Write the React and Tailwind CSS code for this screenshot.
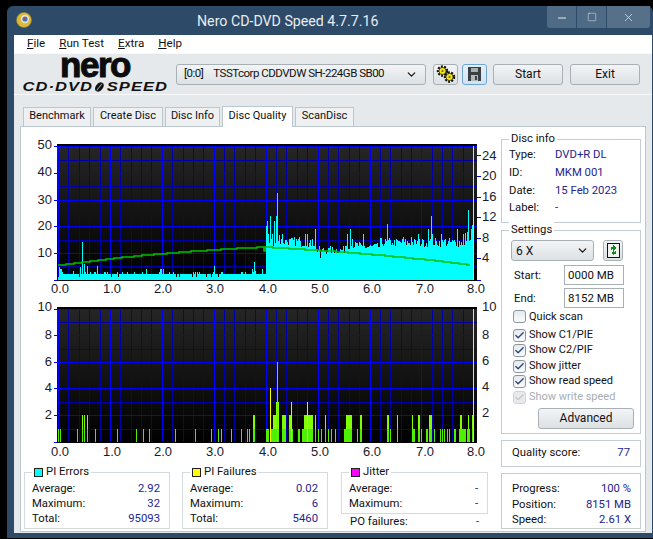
import React from 'react';
import { ChevronDown, Check, Minus, Square, X } from 'lucide-react';

// chart 1 data: one bar per pixel column, x in page coordinates
let seed = 7;
const rnd = () => {
	seed = (seed * 16807) % 2147483647;
	return seed / 2147483647;
};

const peaks = {
	59: 13, 60: 11, 61: 11, 73: 9, 80: 13, 82: 38, 84: 16, 87: 14, 97: 14, 104: 8, 105: 8, 127: 8, 146: 11, 160: 11, 161: 11, 163: 11,
	214: 14, 252: 11, 254: 18, 255: 9, 262: 11, 266: 54, 267: 59, 268: 46, 270: 64, 272: 46, 274: 59, 276: 64, 277: 87, 279: 45,
	282: 46, 285: 40, 299: 43, 305: 46, 307: 46, 312: 41, 315: 51, 320: 22, 329: 32, 347: 46, 350: 51, 352: 41, 363: 46, 375: 36,
	387: 56, 392: 37, 403: 43, 411: 43, 418: 46, 423: 40, 428: 51, 431: 64, 432: 46, 441: 46, 445: 41, 457: 51, 463: 46, 465: 47,
	467: 48, 468: 70, 471: 51, 472: 55,
};

const baseHeight = (x) => {
	const r = rnd();
	if (x < 266) return r > 0.9 ? 8 : r < 0.06 ? 3 : 6;
	if (x < 300) return 34 + r * 9;
	if (x < 316) return 33 + r * 7;
	if (x < 345) return 26 + r * 8;
	if (x < 360) return 31 + r * 8;
	if (x < 380) return 29 + r * 8;
	return 33 + r * 9;
};

const piErrors = [];
for (let x = 58; x < 473; x++) piErrors.push({ x, h: peaks[x] || baseHeight(x) });

const speedLine = (() => {
	const pts = [[58, 264], [110, 257.5], [163, 252.5], [217, 248.5], [263, 246], [264, 250], [265, 246], [320, 249.5], [377, 254], [427, 259], [470, 264]];
	const out = [];
	for (let i = 0; i < pts.length - 1; i++) {
		const [x1, y1] = pts[i];
		const [x2, y2] = pts[i + 1];
		for (let x = x1; x < x2; x += 4) {
			const y = Math.round(y1 + ((y2 - y1) * (x - x1)) / (x2 - x1));
			out.push(`${x},${y} ${Math.min(x + 4, x2)},${y}`);
		}
	}
	return out.join(' ');
})();

// chart 2 data: [x, width, level]
const piFailures = [
	[58, 1, 1], [60, 1, 1], [77, 1, 1], [82, 1, 2], [84, 1, 2], [87, 1, 2], [95, 1, 1], [117, 1, 1], [136, 1, 1], [143, 1, 1], [149, 1, 1],
	[175, 1, 1], [195, 1, 1], [211, 1, 1], [218, 1, 1], [221, 1, 1], [231, 1, 1], [241, 1, 1], [247, 1, 1], [249, 1, 1], [253, 2, 2], [266, 2, 1],
	[267, 2, 1], [270, 7, 1], [273, 3, 2], [276, 3, 3], [282, 1, 2], [283, 3, 2], [289, 3, 2], [292, 1, 1], [298, 2, 1], [302, 2, 1], [304, 9, 2],
	[315, 1, 2], [318, 1, 1], [321, 1, 1], [325, 1, 2], [328, 1, 1], [331, 1, 1], [335, 1, 1], [344, 2, 1], [346, 6, 2], [357, 1, 1], [360, 2, 2],
	[387, 2, 2], [390, 1, 1], [397, 1, 2], [412, 1, 2], [413, 2, 1], [418, 2, 2], [421, 1, 1], [426, 2, 1], [429, 3, 2], [434, 1, 1], [440, 1, 1],
	[442, 1, 1], [444, 1, 1], [447, 1, 1], [449, 1, 1], [454, 2, 1], [460, 2, 2], [459, 7, 1], [467, 3, 1], [468, 1, 2], [472, 1, 2],
];
const failureSpikes = [[270, 4, '#ffff00'], [277, 6, '#ffa500'], [291, 3, '#c8ff00'], [307, 3, '#c8ff00']];

const xLabels = [[60, '0.0'], [112, '1.0'], [163, '2.0'], [215, '3.0'], [268, '4.0'], [320, '5.0'], [372, '6.0'], [425, '7.0'], [476, '8.0']];
const xMajor = [58, 110, 162, 214, 266, 318, 370, 421, 473];
const xMinor = [];
for (let i = 0; i < 40; i++) if (i % 5) xMinor.push(Math.round(58 + i * 10.38));

const Plot = ({ id, top, bottom, major, minor, children }) => (
	<>
		<defs>
			<linearGradient id={id} x1="0" y1="0" x2="0" y2="1">
				<stop offset="0" stopColor="#262626" />
				<stop offset="1" stopColor="#000000" />
			</linearGradient>
		</defs>
		<rect x="57" y={top} width="420" height={bottom - top} fill={`url(#${id})`} />
		{xMinor.map((x) => <rect key={x} x={x} y={top} width="1" height={bottom - top} fill="#0000a8" />)}
		{minor.map((y) => <rect key={y} x="57" y={y} width="420" height="1" fill="#0000a8" />)}
		{xMajor.map((x) => <rect key={x} x={x} y={top} width="1" height={bottom - top} fill="#0000ff" />)}
		{major.map((y) => (
			<g key={y}>
				<rect x="57" y={y} width="420" height="1" fill="#0000ff" />
				<rect x="54" y={y} width="3" height="1" fill="#0000ff" />
			</g>
		))}
		{children}
		<rect x="473" y={top} width="1" height={bottom - top} fill="#d8d8d8" />
		<rect x="57" y={top - 1} width="420" height="2" fill="#000000" />
		<rect x="57" y={bottom} width="420" height="1" fill="#000000" />
	</>
);

const AxisText = ({ x, y, anchor = 'end', children }) => (
	<text x={x} y={y} textAnchor={anchor} fontSize="13" fill="#1a1a2e" fontFamily="'Liberation Sans', sans-serif">{children}</text>
);

const ChartOne = () => (
	<svg width="480" height="165" viewBox="21 130 480 165" shapeRendering="crispEdges" className="block">
		<Plot id="plotA" top={144} bottom={279} major={[145, 172, 199, 225, 252, 279]} minor={[159, 185, 212, 239, 265]}>
			{piErrors.map((b) => <rect key={b.x} x={b.x} y={279 - b.h} width="1" height={b.h} fill="#00ffff" />)}
			<polyline points={speedLine} fill="none" stroke="#00c000" strokeWidth="1.5" shapeRendering="auto" />
		</Plot>
		{[154, 175, 196, 216, 237, 257, 279].map((y) => <rect key={y} x="477" y={y} width="4" height="1" fill="#0000ff" />)}
		{[[24, 159], [20, 179], [16, 200], [12, 220], [8, 241], [4, 261]].map(([v, y]) => <AxisText key={v} x={482} y={y} anchor="start">{v}</AxisText>)}
		{[[50, 148], [40, 175], [30, 203], [20, 229], [10, 256]].map(([v, y]) => <AxisText key={v} x={52} y={y}>{v}</AxisText>)}
		{xLabels.map(([x, t]) => <AxisText key={t} x={x} y={292} anchor="middle">{t}</AxisText>)}
	</svg>
);

const ChartTwo = () => (
	<svg width="480" height="165" viewBox="21 295 480 165" shapeRendering="crispEdges" className="block">
		<Plot id="plotB" top={307} bottom={441} major={[308, 334, 361, 387, 414, 441]} minor={[321, 348, 374, 401, 428]}>
			{piFailures.filter((b) => b[2] > 1).map(([x, w, l]) => <rect key={`u${x}`} x={x} y={441 - l * 13.4} width={w} height={l * 13.4} fill="#80ff00" />)}
			{piFailures.map(([x, w]) => <rect key={x} x={x} y={428} width={w} height="13" fill="#4cf000" />)}
			{failureSpikes.map(([x, l, c]) => <rect key={x} x={x} y={441 - l * 13.4} width="1" height={l * 13.4} fill={c} />)}
		</Plot>
		{[[10, 310], [8, 338], [6, 364], [4, 390], [2, 416]].map(([v, y]) => <AxisText key={v} x={482} y={y} anchor="start">{v}</AxisText>)}
		{[[10, 310], [8, 338], [6, 365], [4, 391], [2, 418]].map(([v, y]) => <AxisText key={v} x={52} y={y}>{v}</AxisText>)}
		{xLabels.map(([x, t]) => <AxisText key={t} x={x} y={455} anchor="middle">{t}</AxisText>)}
	</svg>
);

const GroupBox = ({ title, swatch, className, children }) => (
	<div className={`relative border ${className}`}>
		<div className="absolute -top-[9px] left-[7px] flex items-center gap-[3px] bg-white px-[2px] leading-[16px]">
			{swatch && <span className={`h-[9px] w-[9px] border border-[#222] ${swatch}`}></span>}
			<span>{title}</span>
		</div>
		{children}
	</div>
);

const StatRow = ({ label, value }) => (
	<div className="flex h-[15px] items-center justify-between leading-[15px]">
		<span>{label}</span>
		<span className="text-[#24248f]">{value}</span>
	</div>
);

const Stats = ({ title, swatch, rows, className }) => (
	<GroupBox title={title} swatch={swatch} className={`border-[#d3dae0] pt-[8px] pr-[9px] pl-[7px] ${className}`}>
		{rows.map(([l, v]) => <StatRow key={l} label={l} value={v} />)}
	</GroupBox>
);

const Btn = ({ focused, className = '', children }) => (
	<div className={`flex h-[21px] items-center rounded-[3px] border bg-gradient-to-b ${focused ? 'border-[#6ea5d8] from-[#e4f0fa] to-[#cfe2f3]' : 'border-[#a8b0b6] from-[#f2f4f5] to-[#dde1e4]'} ${className}`}>
		{children}
	</div>
);

const CheckRow = ({ label, checked, disabled, className = '' }) => (
	<div className={`flex h-[15.5px] items-center gap-[3px] whitespace-nowrap ${className} ${disabled ? 'text-[#a6adb3]' : ''}`}>
		<span className={`flex h-[13px] w-[13px] items-center justify-center rounded-[3px] border ${disabled ? 'border-[#d0d4d8] bg-[#e8eaec]' : 'border-[#8d969d] bg-gradient-to-b from-[#e6eaee] to-[#fafbfc]'}`}>
			{checked && <Check size={11} strokeWidth={3} className={disabled ? 'text-[#c4c9cd]' : 'text-[#2c4a78]'} />}
		</span>
		<span>{label}</span>
	</div>
);

const Mnemonic = ({ first, rest }) => (
	<span><span className="underline">{first}</span>{rest}</span>
);

const Tab = ({ label, active, className }) => (
	<div className={`flex items-center justify-center rounded-t-[1px] border border-b-0 border-[#bcc6ce] pb-[2px] text-[11px] ${active ? 'relative z-10 -mb-px h-[21px] bg-white' : 'h-[19px] bg-[#eef0f2]'} ${className}`}>
		{label}
	</div>
);

const AppIcon = () => (
	<svg width="16" height="16" viewBox="0 0 16 16" className="mx-[2px]">
		<circle cx="8" cy="8" r="7.5" fill="#d9b93a" />
		<circle cx="8" cy="8" r="7.5" fill="none" stroke="#9a8124" strokeWidth="0.6" />
		<circle cx="9" cy="7" r="4.2" fill="#e9e4d0" />
		<circle cx="9" cy="7" r="2.6" fill="#4a78b8" />
		<circle cx="9" cy="7" r="1.1" fill="#c8403a" />
	</svg>
);

const Gear = ({ cx, cy }) => (
	<g>
		<circle cx={cx} cy={cy} r="4.1" fill="none" stroke="#111" strokeWidth="3.2" strokeDasharray="1.7 1.2" />
		<circle cx={cx} cy={cy} r="3.6" fill="#f6e512" stroke="#111" strokeWidth="0.7" />
		<circle cx={cx} cy={cy} r="1.1" fill="#6b6410" />
	</g>
);

const GearsIcon = () => (
	<svg width="20" height="18" viewBox="0 0 20 18">
		<Gear cx="6.5" cy="6" />
		<Gear cx="13.5" cy="12" />
	</svg>
);

const SaveIcon = () => (
	<svg width="13" height="14" viewBox="0 0 13 14" shapeRendering="crispEdges">
		<rect x="0" y="0" width="13" height="14" fill="#3a3f42" />
		<rect x="3" y="1" width="7" height="4" fill="#a8adb0" />
		<rect x="3" y="8" width="7" height="6" fill="#b4b8ba" />
		<rect x="7" y="9" width="2" height="4" fill="#3a3f42" />
	</svg>
);

const RefreshIcon = () => (
	<svg width="13" height="15" viewBox="0 0 13 15" shapeRendering="crispEdges">
		<rect x="0.5" y="0.5" width="12" height="14" fill="#eef3ee" stroke="#111" />
		<path d="M4 7V4h2V2l3 3-3 3V6H5v1z" fill="#0a8a1e" />
		<path d="M9 8v3H7v2l-3-3 3-3v2h1V8z" fill="#0a8a1e" />
	</svg>
);

const Logo = () => (
	<div className="flex w-[162px] flex-col items-center pt-[1px]">
		<div className="mt-[-4px] h-[24px] font-['Liberation_Sans'] text-[35px] leading-[24px] font-bold tracking-[-1.5px] text-[#0c0c0c] [-webkit-text-stroke:1px_#0c0c0c]">nero</div>
		<div className="mt-[4px] flex origin-center scale-x-[1.27] items-center font-['Liberation_Sans'] text-[13px] leading-[12px] font-bold tracking-[0.8px] text-[#111] italic">
			<span>CD·DVD</span>
			<svg width="9" height="12" viewBox="0 0 11 12" className="mx-[1px]">
				<ellipse cx="5.5" cy="6" rx="3.6" ry="6" transform="rotate(28 5.5 6)" fill="#111" />
				<path d="M3 10 L8 2" stroke="#e6e9eb" strokeWidth="0.8" />
			</svg>
			<span>SPEED</span>
		</div>
	</div>
);

export default function App() {
	return (
		<div className="flex h-[539px] w-[653px] flex-col overflow-hidden bg-black pt-[6px] pb-px pl-[7px] font-['Roboto',sans-serif] text-[11.3px] text-[#111]">
			<div className="flex flex-1 flex-col rounded-t-[6px] bg-[#2d4a69] pr-px pb-[5px] pl-[7px]">
				{/* title bar */}
				<div className="flex h-[29px] shrink-0 items-start">
					<div className="flex h-[29px] w-[183px] items-center pb-[1px]">
						<AppIcon />
					</div>
					<div className="pt-[5px] text-[14.2px] leading-[20px] text-[#e8edf2]">Nero CD-DVD Speed 4.7.7.16</div>
					<div className="mr-[2px] ml-auto flex h-[22px] gap-px text-[#e8edf2]">
						<div className="flex w-[29px] items-end justify-center rounded-bl-[3px] bg-[#4f6a85] pb-[4px]"><Minus size={12} /></div>
						<div className="flex w-[29px] items-center justify-center bg-[#4f6a85]"><Square size={10} strokeWidth={1.2} /></div>
						<div className="flex w-[43px] items-center justify-center rounded-br-[3px] bg-[#56708a]"><X size={13} strokeWidth={1.3} /></div>
					</div>
				</div>

				{/* client area */}
				<div className="flex flex-1 flex-col bg-[#e6e9eb]">
					<div className="flex h-[18px] shrink-0 items-center gap-[14px] bg-white pl-[13px] text-[11.6px]">
						<Mnemonic first="F" rest="ile" />
						<Mnemonic first="R" rest="un Test" />
						<Mnemonic first="E" rest="xtra" />
						<Mnemonic first="H" rest="elp" />
					</div>
					<div className="flex h-[42px] shrink-0 items-center border-y border-y-[#f8f9fa]">
						<Logo />
						<Btn className="mr-[7px] w-[250px] justify-between px-[7px]">
							<span className="flex gap-[10px] text-[11.5px] tracking-[-0.5px] whitespace-pre">
								<span>[0:0]</span>
								<span>TSSTcorp CDDVDW SH-224GB SB00</span>
							</span>
							<ChevronDown size={13} strokeWidth={2.2} />
						</Btn>
						<Btn className="mr-[4px] w-[25px] justify-center"><GearsIcon /></Btn>
						<Btn focused className="mr-[6px] w-[25px] justify-center"><SaveIcon /></Btn>
						<Btn className="mr-[7px] w-[70px] justify-center text-[12px]">Start</Btn>
						<Btn className="w-[70px] justify-center text-[12px]">Exit</Btn>
					</div>

					{/* tabs */}
					<div className="flex flex-1 flex-col px-[6px] pt-[11px]">
						<div className="flex h-[20px] shrink-0 items-end gap-[2px] pl-[3px]">
							<Tab label="Benchmark" className="w-[68px]" />
							<Tab label="Create Disc" className="w-[70px]" />
							<Tab label="Disc Info" className="w-[55px]" />
							<Tab label="Disc Quality" active className="w-[71px]" />
							<Tab label="ScanDisc" className="w-[59px]" />
						</div>
						<div className="flex h-[406px] border border-[#bcc6ce] bg-white">
							<div className="w-[480px] pt-[4px]">
								<ChartOne />
								<ChartTwo />
								<div className="mt-[11px] flex items-start pl-[3px]">
									<Stats title="PI Errors" swatch="bg-[#00ffff]" className="mr-[12px] h-[57px] w-[146px]" rows={[['Average:', '2.92'], ['Maximum:', '32'], ['Total:', '95093']]} />
									<Stats title="PI Failures" swatch="bg-[#ffff00]" className="mr-[13px] h-[57px] w-[146px]" rows={[['Average:', '0.02'], ['Maximum:', '6'], ['Total:', '5460']]} />
									<div className="w-[147px]">
										<Stats title="Jitter" swatch="bg-[#ff00ff]" className="h-[42px]" rows={[['Average:', '-'], ['Maximum:', '-']]} />
										<div className="px-[9px]"><StatRow label="PO failures:" value="-" /></div>
									</div>
								</div>
							</div>

							<div className="w-[140px] pt-[12px]">
								<GroupBox title="Disc info" className="h-[84px] border-[#c5cdd4] pt-[7px] pl-[7px]">
									<div className="grid auto-rows-[17.7px] grid-cols-[46px_1fr] items-center">
										<span>Type:</span><span className="text-[#24248f]">DVD+R DL</span>
										<span>ID:</span><span className="text-[#24248f]">MKM 001</span>
										<span>Date:</span><span className="text-[#24248f]">15 Feb 2023</span>
										<span>Label:</span><span className="text-[#24248f]">-</span>
									</div>
								</GroupBox>
								<GroupBox title="Settings" className="mt-[7px] h-[204px] border-[#c5cdd4] pt-[9px] pr-[16px] pl-[9px]">
									<div className="flex items-center justify-between">
										<Btn className="w-[83px] justify-between px-[4px] text-[12px]">
											<span>6 X</span>
											<ChevronDown size={13} strokeWidth={2.2} />
										</Btn>
										<Btn className="mr-px w-[20px] justify-center"><RefreshIcon /></Btn>
									</div>
									<div className="mt-[4px] flex h-[20px] items-center justify-between pl-[3px]">
										<span className="pt-[2px]">Start:</span>
										<input readOnly value="0000 MB" className="h-[20px] w-[60px] border border-[#a8b0b6] pl-[3px] text-[11.5px]" />
									</div>
									<div className="mt-[3px] flex h-[20px] items-center justify-between pl-[3px]">
										<span className="pt-[2px]">End:</span>
										<input readOnly value="8152 MB" className="h-[20px] w-[60px] border border-[#a8b0b6] pl-[3px] text-[11.5px]" />
									</div>
									<div className="mt-px pl-[2px] text-[11px]">
										<CheckRow label="Quick scan" className="mb-[2.75px]" />
										<CheckRow label="Show C1/PIE" checked />
										<CheckRow label="Show C2/PIF" checked />
										<CheckRow label="Show jitter" checked />
										<CheckRow label="Show read speed" checked />
										<CheckRow label="Show write speed" checked disabled />
									</div>
									<div className="mt-[3px] -mr-[10px] flex justify-end">
										<Btn className="w-[96px] justify-center text-[12px]">Advanced</Btn>
									</div>
								</GroupBox>
								<div className="mt-[6px] flex h-[27px] items-center justify-between border border-[#c5cdd4] px-[10px]">
									<span>Quality score:</span>
									<span className="text-[#24248f]">77</span>
								</div>
								<div className="mt-[6px] flex h-[56px] flex-col gap-[0.5px] border border-[#c5cdd4] pt-[7px] pr-[9px] pl-[10px]">
									<StatRow label="Progress:" value="100 %" />
									<StatRow label="Position:" value="8151 MB" />
									<StatRow label="Speed:" value="2.61 X" />
								</div>
							</div>
						</div>
					</div>
				</div>
			</div>
		</div>
	);
}
